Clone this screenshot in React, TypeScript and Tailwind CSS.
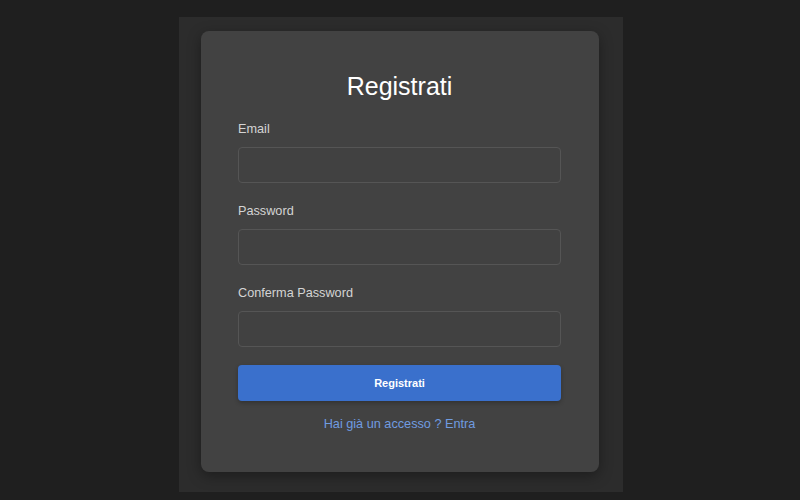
const fields = [
  { id: 'email', label: 'Email', type: 'email' },
  { id: 'password', label: 'Password', type: 'password' },
  { id: 'confirm', label: 'Conferma Password', type: 'password' },
]

export default function App() {
  return (
    <div className="min-h-screen bg-[#1f1f1f] flex justify-center pl-[2px] pt-[17px] font-['Liberation_Sans',Arial,sans-serif]">
      <div className="w-[444px] h-[475px] bg-[#2c2c2c] pl-[22px] pt-[14px]">
        <form
          className="w-[398px] h-[441px] bg-[#424242] rounded-lg shadow-[0_4px_14px_rgba(0,0,0,0.35)] pl-[37px] pr-[38px] pt-[40px]"
          onSubmit={(e) => e.preventDefault()}
        >
          <h1 className="text-center text-white text-[25px] leading-[30px] mb-5">Registrati</h1>

          {fields.map((f) => (
            <div key={f.id} className="mb-5">
              <label htmlFor={f.id} className="block text-[#d4d4d4] text-[12.7px] leading-4 mb-[10px]">
                {f.label}
              </label>
              <input
                id={f.id}
                type={f.type}
                className="block w-full h-9 rounded bg-[#414141] border border-[#555555] px-3 text-sm text-white outline-none"
              />
            </div>
          ))}

          <button
            type="submit"
            className="mt-[-2px] w-full h-9 rounded bg-[#3a70cc] text-white text-[11px] font-bold shadow-[0_2px_4px_rgba(0,0,0,0.25)]"
          >
            Registrati
          </button>

          <p className="mt-[15px] text-center text-[12.7px] leading-4">
            <a href="#" className="text-[#709ce0]">
              Hai già un accesso ? Entra
            </a>
          </p>
        </form>
      </div>
    </div>
  )
}
